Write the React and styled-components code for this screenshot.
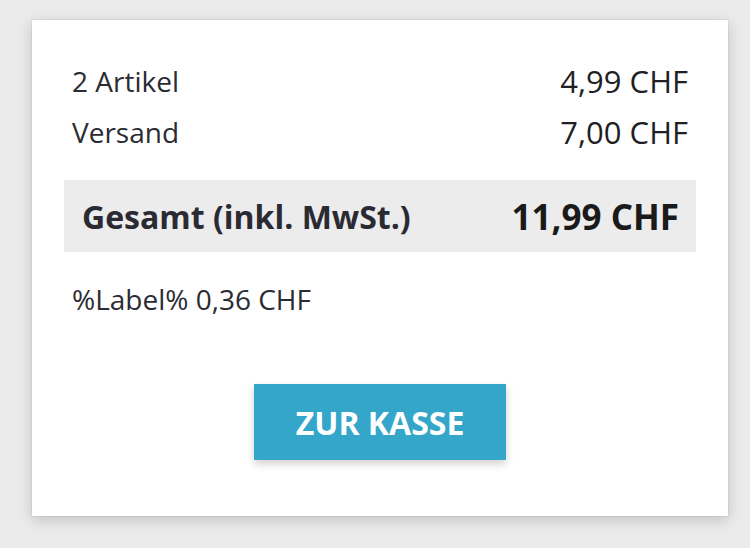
import React from "react";
import styled, { createGlobalStyle } from "styled-components";

const Global = createGlobalStyle`
  html, body { margin: 0; padding: 0; background: #ebebeb; }
  body { font-family: "Open Sans", "Noto Sans", sans-serif; color: #2b2b33; }
`;

const Page = styled.div`
  padding: 20px 22px 32px 32px;
`;

const Card = styled.section`
  width: 696px;
  height: 496px;
  box-sizing: border-box;
  background: #fff;
  padding: 35px 32px 0;
  box-shadow: 0 0 0 1px rgba(0,0,0,0.04), 0 4px 14px rgba(0,0,0,0.18);
  display: flex;
  flex-direction: column;
`;

const Row = styled.div`
  display: flex;
  justify-content: space-between;
  align-items: center;
  padding: 0 8px;
  height: 51px;
  font-size: 28px;
  color: #2b2b33;
`;

const Value = styled.span`
  font-size: 31px;
  color: #1f1f24;
`;

const TotalBox = styled.div`
  margin-top: 23px;
  height: 72px;
  background: #ececec;
  display: flex;
  justify-content: space-between;
  align-items: center;
  padding: 0 17px 0 18px;
`;

const TotalLabel = styled.span`
  font-size: 32px;
  font-weight: 700;
  color: #2a2a33;
`;

const TotalValue = styled.span`
  font-size: 35px;
  font-weight: 700;
  color: #1a1a1a;
`;

const Tax = styled.div`
  margin-top: 30px;
  padding: 0 8px;
  font-size: 28px;
  line-height: 34px;
  color: #2b2b33;
`;

const Actions = styled.div`
  display: flex;
  justify-content: center;
  margin-top: 68px;
`;

const Checkout = styled.button`
  width: 252px;
  height: 76px;
  border: 0;
  background: #33a6c9;
  color: #fff;
  font-family: "Open Sans", sans-serif;
  font-weight: 700;
  font-size: 32px;
  box-shadow: 0 4px 8px rgba(0,0,0,0.18);
  cursor: pointer;
`;

export default function App() {
  return (
    <>
      <Global />
      <Page>
        <Card>
          <Row><span>2 Artikel</span><Value>4,99 CHF</Value></Row>
          <Row><span>Versand</span><Value>7,00 CHF</Value></Row>
          <TotalBox>
            <TotalLabel>Gesamt (inkl. MwSt.)</TotalLabel>
            <TotalValue>11,99 CHF</TotalValue>
          </TotalBox>
          <Tax>%Label% 0,36 CHF</Tax>
          <Actions>
            <Checkout>ZUR KASSE</Checkout>
          </Actions>
        </Card>
      </Page>
    </>
  );
}
